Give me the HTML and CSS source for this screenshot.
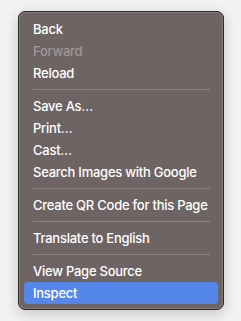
FILE: index.html
```html
<!DOCTYPE html>
<html>
<head>
    <title>Context Menu</title>
    <link rel="stylesheet" href="styles.css">
</head>
<body>
    <div class="menu">
        <div class="item">Back</div>
        <div class="item disabled">Forward</div>
        <div class="item">Reload</div>
        <div class="sep"></div>
        <div class="item">Save As…</div>
        <div class="item">Print…</div>
        <div class="item">Cast…</div>
        <div class="item">Search Images with Google</div>
        <div class="sep"></div>
        <div class="item">Create QR Code for this Page</div>
        <div class="sep"></div>
        <div class="item">Translate to English</div>
        <div class="sep"></div>
        <div class="item">View Page Source</div>
        <div class="item active">Inspect</div>
    </div>
</body>
</html>
```

FILE: styles.css
```css
body {
    margin: 0;
    height: 100vh;
    background-color: #f2f2f2;
    font-family: Inter, "Noto Sans", sans-serif;
}

.menu {
    box-sizing: border-box;
    width: 206px;
    margin: 11px 0 0 18px;
    padding: 6px 5px 5px 5px;
    background-color: #6e6464;
    border: 1px solid #2e2a2a;
    border-radius: 7px;
    box-shadow: inset 0 0 0 1px rgba(255, 255, 255, 0.15), 0 4px 14px rgba(0, 0, 0, 0.18);
}

.item {
    height: 22px;
    line-height: 22px;
    padding-left: 9px;
    font-size: 13px;
    font-weight: 500;
    letter-spacing: -0.25px;
    color: #ffffff;
    border-radius: 4px;
    white-space: nowrap;
}

.item.disabled {
    color: #a09898;
}

.item.active {
    background-color: #5587ea;
}

.sep {
    height: 1px;
    margin: 5px 8px 5px 9px;
    background-color: #8c8484;
}
```
